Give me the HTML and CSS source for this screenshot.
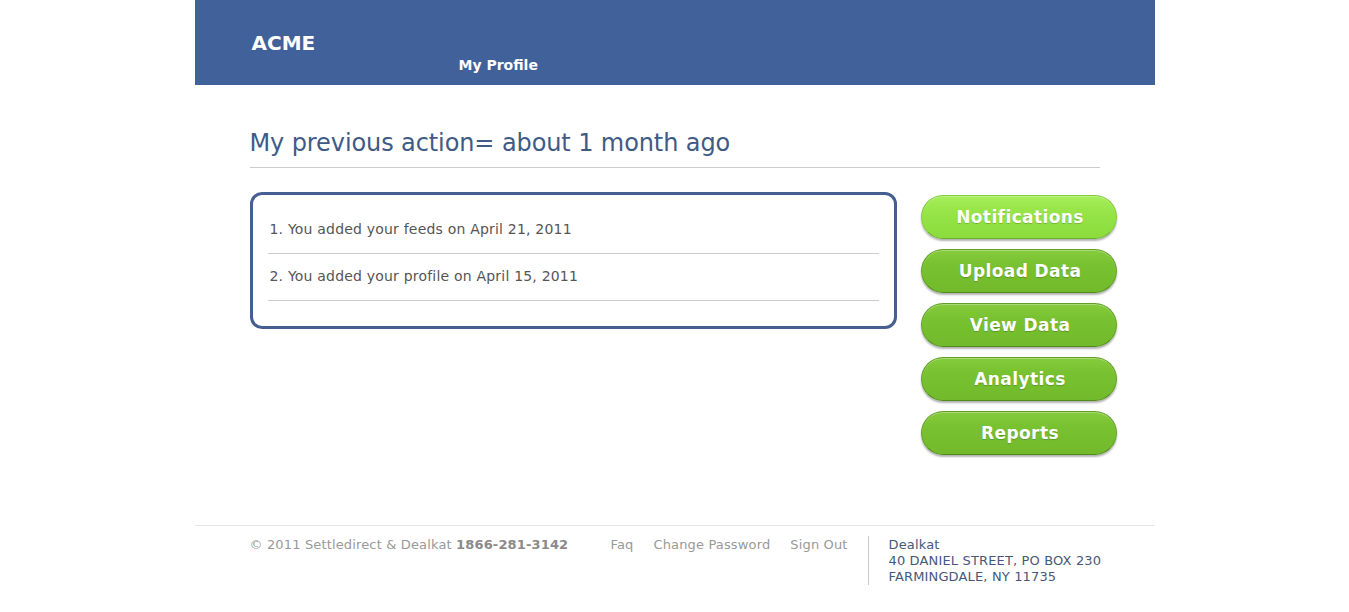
FILE: index.html
```html
<!DOCTYPE html>
<html>
<head>
<meta charset="utf-8">
<link rel="stylesheet" href="styles.css">
</head>
<body>
<div class="page">
  <header class="header">
    <div class="logo">ACME</div>
    <nav class="topnav"><a href="#">My Profile</a></nav>
  </header>
  <main class="main">
    <h1 class="title">My previous action= about 1 month ago</h1>
    <div class="content">
      <div class="actions">
        <div class="action">1. You added your feeds on April 21, 2011</div>
        <div class="action">2. You added your profile on April 15, 2011</div>
      </div>
      <div class="buttons">
        <a class="btn btn-active" href="#">Notifications</a>
        <a class="btn" href="#">Upload Data</a>
        <a class="btn" href="#">View Data</a>
        <a class="btn" href="#">Analytics</a>
        <a class="btn" href="#">Reports</a>
      </div>
    </div>
  </main>
  <footer class="footer">
    <div class="copy">© 2011 Settledirect &amp; Dealkat <b>1866-281-3142</b></div>
    <div class="links">
      <a href="#">Faq</a>
      <a href="#">Change Password</a>
      <a href="#">Sign Out</a>
    </div>
    <div class="address">
      <div>Dealkat</div>
      <div>40 DANIEL STREET, PO BOX 230</div>
      <div>FARMINGDALE, NY 11735</div>
    </div>
  </footer>
</div>
</body>
</html>
```
FILE: styles.css
```css
* { box-sizing: border-box; }
body {
  margin: 0;
  background: #fff;
  font-family: "DejaVu Sans", Verdana, sans-serif;
}
a { text-decoration: none; }
.page {
  width: 960px;
  margin: 0 auto;
}
.header {
  height: 85px;
  background: #41619b;
  display: flex;
  align-items: flex-start;
  padding-left: 57px;
}
.logo {
  color: #fff;
  font-weight: bold;
  font-size: 20px;
  margin-top: 31px;
  width: 207px;
}
.topnav { margin-top: 55px; }
.topnav a {
  color: #fff;
  font-weight: bold;
  font-size: 14px;
}
.main {
  padding: 0 38px 0 55px;
  height: 440px;
}
.title {
  margin: 0 17px 0 0;
  padding-top: 44px;
  padding-bottom: 10px;
  font-weight: normal;
  font-size: 24px;
  letter-spacing: -0.1px;
  color: #3f5a85;
  border-bottom: 1px solid #cccccc;
}
.content {
  display: flex;
  gap: 24px;
  margin-top: 24px;
}
.actions {
  flex: 0 0 647px;
  height: 137px;
  border: 3.5px solid #465f91;
  border-radius: 12px;
  padding: 12px 15px 0 15px;
}
.action {
  font-size: 14px;
  letter-spacing: 0.2px;
  color: #555;
  padding: 14px 2px 15px;
  border-bottom: 1px solid #cccccc;
  line-height: 17px;
}
.buttons {
  flex: 0 0 196px;
  display: flex;
  flex-direction: column;
  gap: 10px;
  margin-top: 3px;
}
.btn {
  display: block;
  width: 196px;
  height: 44px;
  border-radius: 22px;
  background: linear-gradient(#86cc3e, #78c130 35%, #72ba2b);
  border: 1px solid #62a024;
  border-bottom-color: #4f8a1a;
  box-shadow: 0 2px 2px rgba(0,0,0,0.3), inset 0 1px 0 rgba(255,255,255,0.3);
  color: #fff;
  font-weight: bold;
  font-size: 17px;
  letter-spacing: 0.4px;
  text-align: center;
  line-height: 43px;
  padding-left: 3px;
  text-shadow: 0 1px 1px rgba(0,0,0,0.2);
}
.btn-active {
  background: linear-gradient(#a6ee5c, #97e548 35%, #8cdc3e);
  border-color: #80cc38;
  border-bottom-color: #6aae2a;
}
.footer {
  border-top: 1px solid #e5e5e5;
  display: flex;
  align-items: flex-start;
  padding: 10px 0 0 55px;
  font-size: 13px;
  letter-spacing: 0.15px;
  color: #999;
}
.copy { width: 361px; line-height: 18px; }
.copy b { color: #8a8a8a; }
.links {
  display: flex;
  gap: 20px;
  width: 257px;
  line-height: 18px;
}
.links a { color: #999; }
.address {
  border-left: 1px solid #cccccc;
  padding-left: 20px;
  padding-top: 1px;
  color: #46587a;
  line-height: 16px;
}
```
